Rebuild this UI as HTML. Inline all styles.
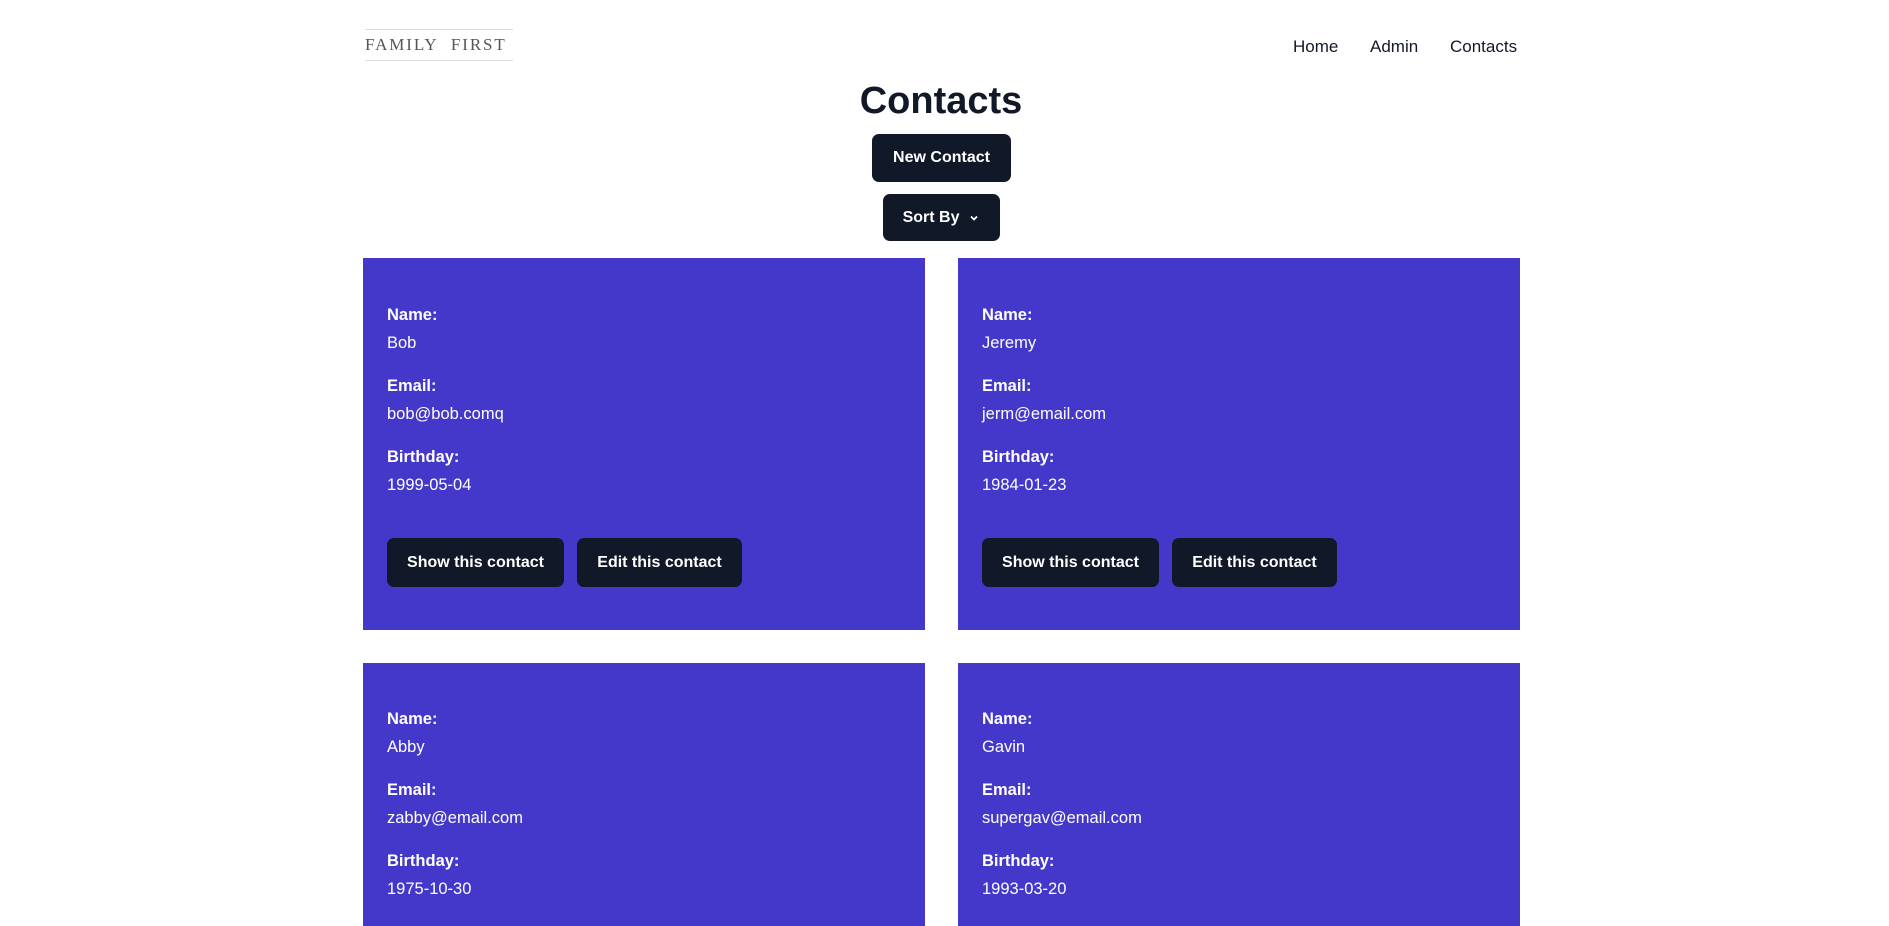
<!DOCTYPE html>
<html><head><meta charset="utf-8"><style>
*{margin:0;padding:0;box-sizing:border-box}
body{width:1889px;height:926px;overflow:hidden;background:#fff;font-family:"Liberation Sans",Arial,sans-serif;color:#111827;position:relative}
.a{position:absolute}
.logo{left:365px;top:29px;width:148px;height:32px;border-top:1px solid #ddd;border-bottom:1px solid #ddd;font-family:"Liberation Serif",serif;font-size:17px;letter-spacing:1.9px;color:#555;line-height:30px;white-space:nowrap;overflow:hidden}
.nav{top:37px;font-size:17px;font-weight:500;color:#111827}
h1{position:absolute;left:0;width:1882px;text-align:center;top:80px;font-size:38px;font-weight:700;color:#111827}
.btn{background:#111827;color:#fff;border-radius:7px;font-size:16px;font-weight:700;display:flex;align-items:center;justify-content:center}
.card{background:#4338ca;color:#fff;width:562px}
.lab{font-weight:700;font-size:16.5px}
.val{font-size:16.5px}
</style></head><body>
<div class="a logo">FAMILY&nbsp;&nbsp;FIRST</div>
<div class="a nav" style="left:1293px">Home</div>
<div class="a nav" style="left:1370px">Admin</div>
<div class="a nav" style="left:1450px">Contacts</div>
<h1>Contacts</h1>
<div class="a btn" style="left:872px;top:134px;width:139px;height:48px">New Contact</div>
<div class="a btn" style="left:883px;top:194px;width:117px;height:47px">Sort By&nbsp;&nbsp;<svg width="12" height="12" viewBox="0 0 12 12"><path d="M3 4.5l3 3 3-3" stroke="#fff" stroke-width="1.8" fill="none"/></svg></div>

<div class="a card" style="left:363px;top:258px;height:372px"></div>
<div class="a card" style="left:958px;top:258px;height:372px"></div>
<div class="a card" style="left:363px;top:663px;height:263px"></div>
<div class="a card" style="left:958px;top:663px;height:263px"></div>

<div class="a" style="left:387px;top:306px;color:#fff">
<div class="lab">Name:</div><div class="val" style="margin-top:9px">Bob</div>
<div class="lab" style="margin-top:24px">Email:</div><div class="val" style="margin-top:9px">bob@bob.comq</div>
<div class="lab" style="margin-top:24px">Birthday:</div><div class="val" style="margin-top:9px">1999-05-04</div>
</div>
<div class="a" style="left:982px;top:306px;color:#fff">
<div class="lab">Name:</div><div class="val" style="margin-top:9px">Jeremy</div>
<div class="lab" style="margin-top:24px">Email:</div><div class="val" style="margin-top:9px">jerm@email.com</div>
<div class="lab" style="margin-top:24px">Birthday:</div><div class="val" style="margin-top:9px">1984-01-23</div>
</div>
<div class="a" style="left:387px;top:710px;color:#fff">
<div class="lab">Name:</div><div class="val" style="margin-top:9px">Abby</div>
<div class="lab" style="margin-top:24px">Email:</div><div class="val" style="margin-top:9px">zabby@email.com</div>
<div class="lab" style="margin-top:24px">Birthday:</div><div class="val" style="margin-top:9px">1975-10-30</div>
</div>
<div class="a" style="left:982px;top:710px;color:#fff">
<div class="lab">Name:</div><div class="val" style="margin-top:9px">Gavin</div>
<div class="lab" style="margin-top:24px">Email:</div><div class="val" style="margin-top:9px">supergav@email.com</div>
<div class="lab" style="margin-top:24px">Birthday:</div><div class="val" style="margin-top:9px">1993-03-20</div>
</div>

<div class="a btn" style="left:387px;top:538px;width:177px;height:49px">Show this contact</div>
<div class="a btn" style="left:577px;top:538px;width:165px;height:49px">Edit this contact</div>
<div class="a btn" style="left:982px;top:538px;width:177px;height:49px">Show this contact</div>
<div class="a btn" style="left:1172px;top:538px;width:165px;height:49px">Edit this contact</div>
</body></html>
